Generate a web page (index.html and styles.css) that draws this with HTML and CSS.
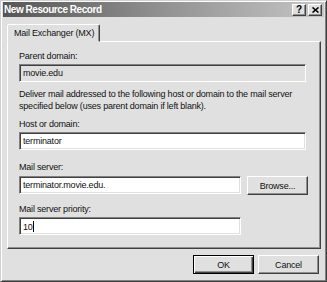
FILE: index.html
```html
<!DOCTYPE html>
<html>
<head>
<meta charset="utf-8">
<link rel="stylesheet" href="styles.css">
</head>
<body>
<div class="window">
  <div class="titlebar">
    <span class="title">New Resource Record</span>
    <div class="tbtns">
      <span class="tbtn q">?</span>
      <span class="tbtn x"><svg width="7" height="6" viewBox="0 0 7 6"><path d="M0.5 0.5 L6.5 5.5 M6.5 0.5 L0.5 5.5" stroke="#000" stroke-width="1.6" fill="none"/></svg></span>
    </div>
  </div>
  <div class="client">
    <div class="tabs">
      <div class="tab">Mail Exchanger (MX)</div>
    </div>
    <div class="panel">
      <div class="label">Parent domain:</div>
      <div class="field ro">movie.edu</div>
      <div class="desc">Deliver mail addressed to the following host or domain to the mail server specified below (uses parent domain if left blank).</div>
      <div class="label">Host or domain:</div>
      <div class="field">terminator</div>
      <div class="label l2">Mail server:</div>
      <div class="row">
        <div class="field short">terminator.movie.edu.</div>
        <div class="btn browse">Browse...</div>
      </div>
      <div class="label l3">Mail server priority:</div>
      <div class="field short">10<span class="caret"></span></div>
    </div>
    <div class="footer">
      <div class="btn ok">OK</div>
      <div class="btn">Cancel</div>
    </div>
  </div>
</div>
</body>
</html>
```
FILE: styles.css
```css
html, body {
  margin: 0;
  padding: 0;
  background: #e0e0e0;
}
body {
  width: 327px;
  height: 282px;
  overflow: hidden;
  font-family: "Liberation Sans", Arial, sans-serif;
  font-size: 9px;
  letter-spacing: -0.2px;
  color: #111;
}
.window {
  box-sizing: border-box;
  width: 327px;
  height: 282px;
  background: #e0e0e0;
  border: 1px solid #d0d0d0;
  border-right-color: #404040;
  border-bottom-color: #404040;
  box-shadow: inset 1px 1px 0 #fff, inset -1px -1px 0 #808080;
  padding: 1px 2px 2px 2px;
  display: flex;
  flex-direction: column;
}
.titlebar {
  height: 15px;
  background: linear-gradient(to right, #565656 0%, #8c8c8c 45%, #c6c6c6 100%);
  display: flex;
  align-items: center;
  justify-content: space-between;
  padding: 0 2px 0 1px;
}
.title {
  color: #fff;
  font-weight: bold;
  font-size: 10px;
  letter-spacing: -0.45px;
}
.tbtns {
  display: flex;
  gap: 2px;
}
.tbtn {
  box-sizing: border-box;
  width: 14px;
  height: 12px;
  background: #e0e0e0;
  border: 1px solid;
  border-color: #fff #404040 #404040 #fff;
  box-shadow: inset -1px -1px 0 #909090;
  display: flex;
  align-items: center;
  justify-content: center;
  color: #000;
}
.tbtn.q {
  font-weight: bold;
  font-size: 10px;
  line-height: 10px;
  letter-spacing: 0;
}
.tbtn svg { display: block; }
.client {
  flex: 1;
  padding: 7px 0 0 4px;
  display: flex;
  flex-direction: column;
}
.tabs {
  display: flex;
  height: 17px;
  align-items: flex-end;
}
.tab {
  box-sizing: border-box;
  height: 18px;
  padding: 3px 5px 0 6px;
  line-height: 11px;
  border: 1px solid;
  border-color: #fff #404040 transparent #fff;
  box-shadow: inset -1px 0 0 #909090;
  border-radius: 2px 2px 0 0;
  background: #e0e0e0;
  position: relative;
  z-index: 1;
  margin-bottom: -1px;
}
.panel {
  box-sizing: border-box;
  width: 314px;
  height: 208px;
  border: 1px solid;
  border-color: #fff #404040 #404040 #fff;
  box-shadow: inset -1px -1px 0 #909090;
  padding: 8px 0 0 11px;
  display: flex;
  flex-direction: column;
}
.label {
  height: 12px;
  line-height: 12px;
  margin-bottom: 2px;
}
.l2 { margin-top: 11px; }
.l3 { margin-top: 8px; }
.field {
  box-sizing: border-box;
  height: 18px;
  width: 287px;
  background: #fff;
  border: 1px solid;
  border-color: #808080 #fff #fff #808080;
  box-shadow: inset 1px 1px 0 #404040, inset -1px -1px 0 #e0e0e0;
  padding: 3px 2px 0 3px;
  line-height: 11px;
  white-space: nowrap;
}
.field.ro { background: #e0e0e0; }
.field.short { width: 222px; }
.caret {
  display: inline-block;
  width: 1px;
  height: 11px;
  background: #000;
  vertical-align: -2px;
}
.desc {
  margin-top: 6px;
  margin-bottom: 6px;
  line-height: 12px;
  padding-right: 12px;
}
.row {
  display: flex;
  align-items: flex-start;
  gap: 6px;
  height: 19px;
  margin-top: 1px;
}
.btn {
  box-sizing: border-box;
  width: 61px;
  height: 19px;
  border: 1px solid;
  border-color: #fff #404040 #404040 #fff;
  box-shadow: inset -1px -1px 0 #909090;
  background: #e0e0e0;
  display: flex;
  align-items: center;
  justify-content: center;
  color: #111;
}
.footer {
  display: flex;
  justify-content: flex-end;
  gap: 4px;
  margin-top: 6px;
  width: 314px;
  padding-right: 2px;
  box-sizing: border-box;
}
.btn.ok {
  border-color: #000;
  box-shadow: inset 1px 1px 0 #fff, inset -1px -1px 0 #404040, inset -2px -2px 0 #909090;
}
```
